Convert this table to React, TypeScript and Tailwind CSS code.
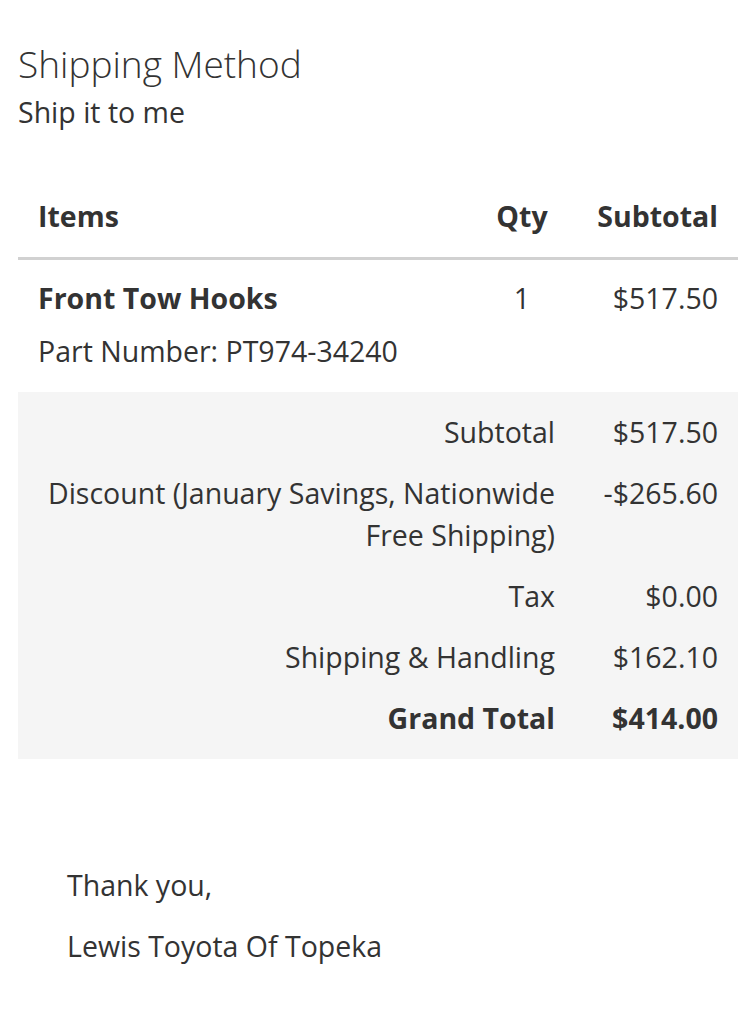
import React from "react";

const totals = [
  { label: "Subtotal", amount: "$517.50" },
  { label: "Discount (January Savings, Nationwide Free Shipping)", amount: "-$265.60" },
  { label: "Tax", amount: "$0.00" },
  { label: "Shipping & Handling", amount: "$162.10" },
];

const App = () => {
  return (
    <div className="bg-white min-h-[1023px] text-[#333333] font-['Open_Sans',sans-serif]">
      {/* Shipping method */}
      <section className="px-[18px] pt-[40px]">
        <h2 className="text-[37px] font-light leading-[48px]">Shipping Method</h2>
        <p className="text-[28.5px] leading-[40px] mt-[4px]">Ship it to me</p>
      </section>

      {/* Items table */}
      <section className="pl-[18px] mt-[43px]">
        <div className="grid grid-cols-[1fr_100px_146px] px-[20px] pt-[20px] pb-[20px] border-b-[3px] border-[#d1d1d1] text-[28.5px] font-bold leading-[42px]">
          <span>Items</span>
          <span className="text-center">Qty</span>
          <span className="text-right">Subtotal</span>
        </div>

        <div className="grid grid-cols-[1fr_100px_146px] px-[20px] pt-[17px] pb-[20px] text-[28.5px] leading-[42px]">
          <div>
            <p className="font-bold">Front Tow Hooks</p>
            <p className="mt-[11px]">Part Number: PT974-34240</p>
          </div>
          <span className="text-center">1</span>
          <span className="text-right">$517.50</span>
        </div>

        {/* Totals */}
        <div className="bg-[#f5f5f5] px-[20px] pt-[19px] pb-[20px] flex flex-col gap-[19px] text-[28.5px] leading-[42px]">
          {totals.map(({ label, amount }) => (
            <div key={label} className="grid grid-cols-[1fr_161px]">
              <span className="text-right pr-[2px]">{label}</span>
              <span className="text-right">{amount}</span>
            </div>
          ))}
          <div className="grid grid-cols-[1fr_161px] font-bold">
            <span className="text-right pr-[2px]">Grand Total</span>
            <span className="text-right">$414.00</span>
          </div>
        </div>
      </section>

      {/* Sign off */}
      <section className="px-[67px] mt-[105px] text-[28.5px] leading-[42px] flex flex-col gap-[19px]">
        <p>Thank you,</p>
        <p>Lewis Toyota Of Topeka</p>
      </section>
    </div>
  );
};

export default App;
